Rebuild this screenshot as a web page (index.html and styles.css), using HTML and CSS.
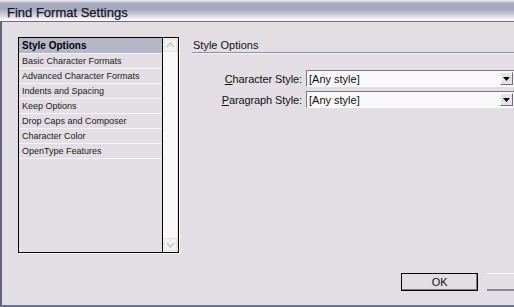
FILE: index.html
```html
<!DOCTYPE html>
<html>
<head>
<meta charset="utf-8">
<link rel="stylesheet" href="styles.css">
</head>
<body>
<div class="window">
  <div class="titlebar"><span class="title">Find Format Settings</span></div>
  <div class="client">
    <div class="main">
      <div class="listwrap">
        <div class="list">
          <div class="items">
            <div class="item selected">Style Options</div>
            <div class="item">Basic Character Formats</div>
            <div class="item">Advanced Character Formats</div>
            <div class="item">Indents and Spacing</div>
            <div class="item">Keep Options</div>
            <div class="item">Drop Caps and Composer</div>
            <div class="item">Character Color</div>
            <div class="item">OpenType Features</div>
          </div>
          <div class="scrollbar">
            <div class="sbtn">
              <svg width="11" height="11" viewBox="0 0 11 11"><path d="M2 7 L5.5 3 L9 7" fill="none" stroke="#c9c8b8" stroke-width="1.5"/></svg>
            </div>
            <div class="sbtn">
              <svg width="11" height="11" viewBox="0 0 11 11"><path d="M2 4 L5.5 8 L9 4" fill="none" stroke="#c9c8b8" stroke-width="1.5"/></svg>
            </div>
          </div>
        </div>
      </div>
      <div class="panel">
        <div class="panel-head">Style Options</div>
        <div class="fields">
          <div class="field">
            <label class="lbl"><u>C</u>haracter Style:</label>
            <div class="select"><span class="val">[Any style]</span><span class="arrow"><svg width="7" height="4" viewBox="0 0 7 4"><path d="M0 0 H7 L3.5 4 Z" fill="#000"/></svg></span></div>
          </div>
          <div class="field">
            <label class="lbl"><u>P</u>aragraph Style:</label>
            <div class="select"><span class="val">[Any style]</span><span class="arrow"><svg width="7" height="4" viewBox="0 0 7 4"><path d="M0 0 H7 L3.5 4 Z" fill="#000"/></svg></span></div>
          </div>
        </div>
      </div>
    </div>
    <div class="buttons">
      <button class="btn ok">OK</button>
      <button class="btn cancel"></button>
    </div>
  </div>
</div>
</body>
</html>
```

FILE: styles.css
```css
html, body {
  margin: 0;
  padding: 0;
  background: #e3dee4;
  overflow: hidden;
}
.window {
  width: 514px;
  height: 307px;
  display: flex;
  flex-direction: column;
  font-family: "Liberation Sans", Arial, sans-serif;
  color: #000;
}
.titlebar {
  height: 22px;
  box-sizing: border-box;
  border-bottom: 1px solid #6b7088;
  background: linear-gradient(to bottom, #f2f2f6 0px, #a9acc0 3px, #a5a8bd 9px, #c9cad8 14px, #e8e8ef 18px, #ffffff 20px, #f0f0f4 21px);
  display: flex;
  align-items: center;
  padding-left: 7px;
}
.title {
  font-family: "Liberation Sans", Arial, sans-serif;
  font-size: 13px;
  color: #151525;
  padding-top: 3px;
  -webkit-text-stroke: 0.25px #151525;
}
.client {
  flex: 1;
  border-left: 2px solid #5f6382;
  border-bottom: 2px solid #6e7190;
  display: flex;
  flex-direction: column;
  box-sizing: border-box;
}
.main {
  display: flex;
  padding-top: 15px;
  padding-left: 16px;
}
.listwrap {
  box-shadow: 1px 1px 0 #ffffff;
}
.list {
  border: 1px solid #000;
  width: 159px;
  height: 214px;
  display: flex;
}
.items {
  width: 143px;
  font-size: 9px;
}
.item {
  height: 14px;
  line-height: 15px;
  border-bottom: 1px solid #f6f4f6;
  padding-left: 3px;
  white-space: nowrap;
  color: #1a1a1a;
}
.item.selected {
  background: #b5b7c9;
  font-weight: bold;
  font-size: 10px;
  height: 15px;
  line-height: 16px;
  color: #000;
}
.scrollbar {
  width: 15px;
  border-left: 1px solid #000;
  background: #f8f8f8;
  display: flex;
  flex-direction: column;
  justify-content: space-between;
  align-items: center;
  padding: 1px 0;
  box-sizing: border-box;
}
.sbtn {
  width: 13px;
  height: 13px;
  box-sizing: border-box;
  border: 1px solid #e6e4dc;
  background: #f3f2ee;
  display: flex;
  align-items: center;
  justify-content: center;
}
.panel {
  flex: 1;
  margin-left: 13px;
}
.panel-head {
  font-size: 11px;
  color: #111;
  padding-left: 1px;
  height: 15px;
  line-height: 16px;
  border-bottom: 1px solid #8d8fa3;
  box-shadow: 0 1px 0 #f4f2f6;
}
.fields {
  padding-top: 17px;
  display: flex;
  flex-direction: column;
  gap: 4px;
}
.field {
  display: flex;
  align-items: center;
}
.lbl {
  width: 114px;
  text-align: right;
  font-size: 11px;
  color: #111;
  padding-right: 4px;
  box-sizing: border-box;
  letter-spacing: -0.1px;
}
.lbl u { text-decoration: underline; }
.select {
  flex: 1;
  height: 17px;
  box-sizing: border-box;
  border-top: 1px solid #7c7a80;
  border-left: 1px solid #7c7a80;
  border-bottom: 1px solid #ffffff;
  background: #f8f8f8;
  display: flex;
  align-items: center;
  justify-content: space-between;
  padding-left: 2px;
  padding-right: 1px;
}
.val {
  font-size: 11px;
  color: #111;
}
.arrow {
  width: 13px;
  height: 13px;
  box-sizing: border-box;
  background: #e6e2e8;
  border-right: 1px solid #6f6c74;
  border-bottom: 1px solid #6f6c74;
  border-top: 1px solid #fff;
  border-left: 1px solid #fff;
  display: flex;
  align-items: center;
  justify-content: center;
}
.buttons {
  margin-top: auto;
  display: flex;
  padding-left: 399px;
  padding-bottom: 14px;
  gap: 9px;
}
.btn {
  font-family: "Liberation Sans", Arial, sans-serif;
  font-size: 11px;
  height: 18px;
  margin: 0;
  padding: 0;
  background: #e3dee4;
  color: #111;
}
.ok {
  width: 86px;
  border: 1px solid #000;
  box-shadow: inset -1px -1px 0 #7e7b82;
}
.cancel {
  width: 30px;
  border: none;
  border-top: 1px solid #fff;
  box-shadow: inset 0 -2px 0 #8a8890;
}
```
